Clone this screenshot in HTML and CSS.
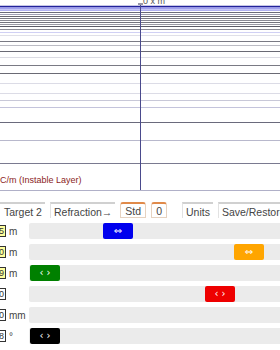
FILE: index.html
```html
<!DOCTYPE html>
<html lang="en">
<head>
  <meta charset="UTF-8">
  <title>Layer Profile</title>
  <link rel="stylesheet" href="styles.css">
</head>
<body>
  <div class="chart">
    <svg width="280" height="196" viewBox="0 0 280 196">
      <text x="143" y="4" class="axis-label">0 x m</text>
      <rect x="138" y="3" width="5" height="2" fill="#99a"/>
      <g stroke-width="1">
        <line x1="0" x2="280" y1="6.5" y2="6.5" stroke="#22229a" stroke-width="1.5"/>
        <line x1="0" x2="280" y1="8" y2="8" stroke="#6a6ae0"/>
        <line x1="0" x2="280" y1="9" y2="9" stroke="#8c8cec"/>
        <line x1="0" x2="280" y1="10.5" y2="10.5" stroke="#b0b0f0"/>
        <line x1="0" x2="280" y1="12.5" y2="12.5" stroke="#6a6a78"/>
        <line x1="0" x2="280" y1="14.5" y2="14.5" stroke="#a0a0b4"/>
        <line x1="0" x2="280" y1="16.5" y2="16.5" stroke="#666670"/>
        <line x1="0" x2="280" y1="18.5" y2="18.5" stroke="#7a7a84"/>
        <line x1="0" x2="280" y1="20.5" y2="20.5" stroke="#8a8a94"/>
        <line x1="0" x2="280" y1="22.5" y2="22.5" stroke="#74747e"/>
        <line x1="0" x2="280" y1="24.5" y2="24.5" stroke="#9a9aa4"/>
        <line x1="0" x2="280" y1="26.5" y2="26.5" stroke="#5a5a66"/>
        <line x1="0" x2="280" y1="29.5" y2="29.5" stroke="#8c8c96"/>
        <line x1="0" x2="280" y1="32.5" y2="32.5" stroke="#d0d0f4"/>
        <line x1="0" x2="280" y1="35.5" y2="35.5" stroke="#e0e0e8"/>
        <line x1="0" x2="280" y1="41.5" y2="41.5" stroke="#7a7a84"/>
        <line x1="0" x2="280" y1="45.5" y2="45.5" stroke="#bcbcc4"/>
        <line x1="0" x2="280" y1="51.5" y2="51.5" stroke="#6a6a74"/>
        <line x1="0" x2="280" y1="57.5" y2="57.5" stroke="#dcdce4"/>
        <line x1="0" x2="280" y1="65.5" y2="65.5" stroke="#7a7a84"/>
        <line x1="0" x2="280" y1="73.5" y2="73.5" stroke="#6a6a74"/>
        <line x1="0" x2="280" y1="83.5" y2="83.5" stroke="#dcdce6"/>
        <line x1="0" x2="280" y1="93.5" y2="93.5" stroke="#dcdce6"/>
        <line x1="0" x2="280" y1="100.5" y2="100.5" stroke="#c8c8d8"/>
        <line x1="0" x2="280" y1="107.5" y2="107.5" stroke="#c4c4dc"/>
        <line x1="0" x2="280" y1="122.5" y2="122.5" stroke="#6a6a7c"/>
        <line x1="0" x2="280" y1="140.5" y2="140.5" stroke="#b8b8cc"/>
        <line x1="0" x2="280" y1="163.5" y2="163.5" stroke="#7a7a90"/>
        <line x1="0" x2="280" y1="190.5" y2="190.5" stroke="#b0b0c8"/>
        <line x1="140.5" x2="140.5" y1="5" y2="190" stroke="#4a4a8c"/>
      </g>
      <text x="0" y="183" class="layer-label">C/m (Instable Layer)</text>
    </svg>
  </div>

  <div class="tabs">
    <span class="tab first">Target 2</span>
    <span class="tab">Refraction&rarr;</span>
    <span class="tab on">Std</span>
    <span class="tab on">0</span>
    <span class="tab wide">Units</span>
    <span class="tab">Save/Restore</span>
  </div>

  <div class="rows">
    <div class="row">
      <span class="field yellow">15</span><span class="unit">m</span>
      <div class="track"><span class="knob blue" style="margin-left: 74px">&hArr;</span></div>
    </div>
    <div class="row">
      <span class="field yellow">10</span><span class="unit">m</span>
      <div class="track"><span class="knob orange" style="margin-left: 205px">&hArr;</span></div>
    </div>
    <div class="row">
      <span class="field yellow">19</span><span class="unit">m</span>
      <div class="track"><span class="knob green" style="margin-left: 1px">&lsaquo; &rsaquo;</span></div>
    </div>
    <div class="row">
      <span class="field">0</span><span class="unit"></span>
      <div class="track"><span class="knob red" style="margin-left: 176px">&lsaquo; &rsaquo;</span></div>
    </div>
    <div class="row">
      <span class="field">0</span><span class="unit">mm</span>
      <div class="track"></div>
    </div>
    <div class="row">
      <span class="field">18</span><span class="unit">&deg;</span>
      <div class="track"><span class="knob black" style="margin-left: 1px">&lsaquo; &rsaquo;</span></div>
    </div>
  </div>
</body>
</html>
```

FILE: styles.css
```css
body {
  margin: 0;
  font-family: "Liberation Sans", Arial, sans-serif;
  background: #fff;
  color: #333;
  width: 280px;
  height: 350px;
  overflow: hidden;
}
.chart svg {
  display: block;
}
.axis-label {
  font-size: 9px;
  fill: #555;
  font-family: "Liberation Sans", Arial, sans-serif;
}
.layer-label {
  font-size: 9px;
  fill: #8b2424;
  font-family: "Liberation Sans", Arial, sans-serif;
}
.tabs {
  display: flex;
  gap: 5px;
  margin-top: 6px;
  height: 16px;
  overflow: hidden;
}
.tab {
  font-size: 10.5px;
  line-height: 14px;
  color: #444;
  padding: 1px 3px 0;
  border-top: 2px solid #d0d0d0;
  border-left: 1px solid #e2e2e2;
  white-space: nowrap;
  flex-shrink: 0;
}
.tab.first {
  border-left: none;
  padding-left: 4px;
  width: 38px;
}
.tab.on {
  border: 1px solid #e6d2c0;
  border-top: 2px solid #e08a4a;
  border-radius: 3px 3px 0 0;
  padding: 0 4px;
}
.tab.wide {
  margin-left: 10px;
}
.rows {
  margin-top: 5px;
  display: flex;
  flex-direction: column;
  gap: 5px;
}
.row {
  display: flex;
  align-items: center;
  height: 16px;
}
.field {
  box-sizing: border-box;
  flex-shrink: 0;
  width: 20px;
  height: 12px;
  margin-left: -14px;
  border: 1px solid #333;
  background: #fff;
  font-size: 9px;
  line-height: 10px;
  text-align: right;
  padding-right: 1px;
  color: #333;
}
.field.yellow {
  background: #ffff9c;
}
.unit {
  box-sizing: border-box;
  flex-shrink: 0;
  width: 23px;
  padding-left: 3px;
  font-size: 10px;
  color: #444;
}
.track {
  flex: 1;
  height: 16px;
  background: #ebebeb;
  border-radius: 2px 0 0 2px;
  display: flex;
}
.knob {
  width: 30px;
  height: 16px;
  border-radius: 2px;
  color: #fff;
  font-family: "DejaVu Sans", sans-serif;
  font-size: 10px;
  line-height: 16px;
  text-align: center;
}
.blue { background: #0000ee; }
.orange { background: #ffa500; }
.green { background: #008000; }
.red { background: #ee0000; }
.black { background: #000; }
```
